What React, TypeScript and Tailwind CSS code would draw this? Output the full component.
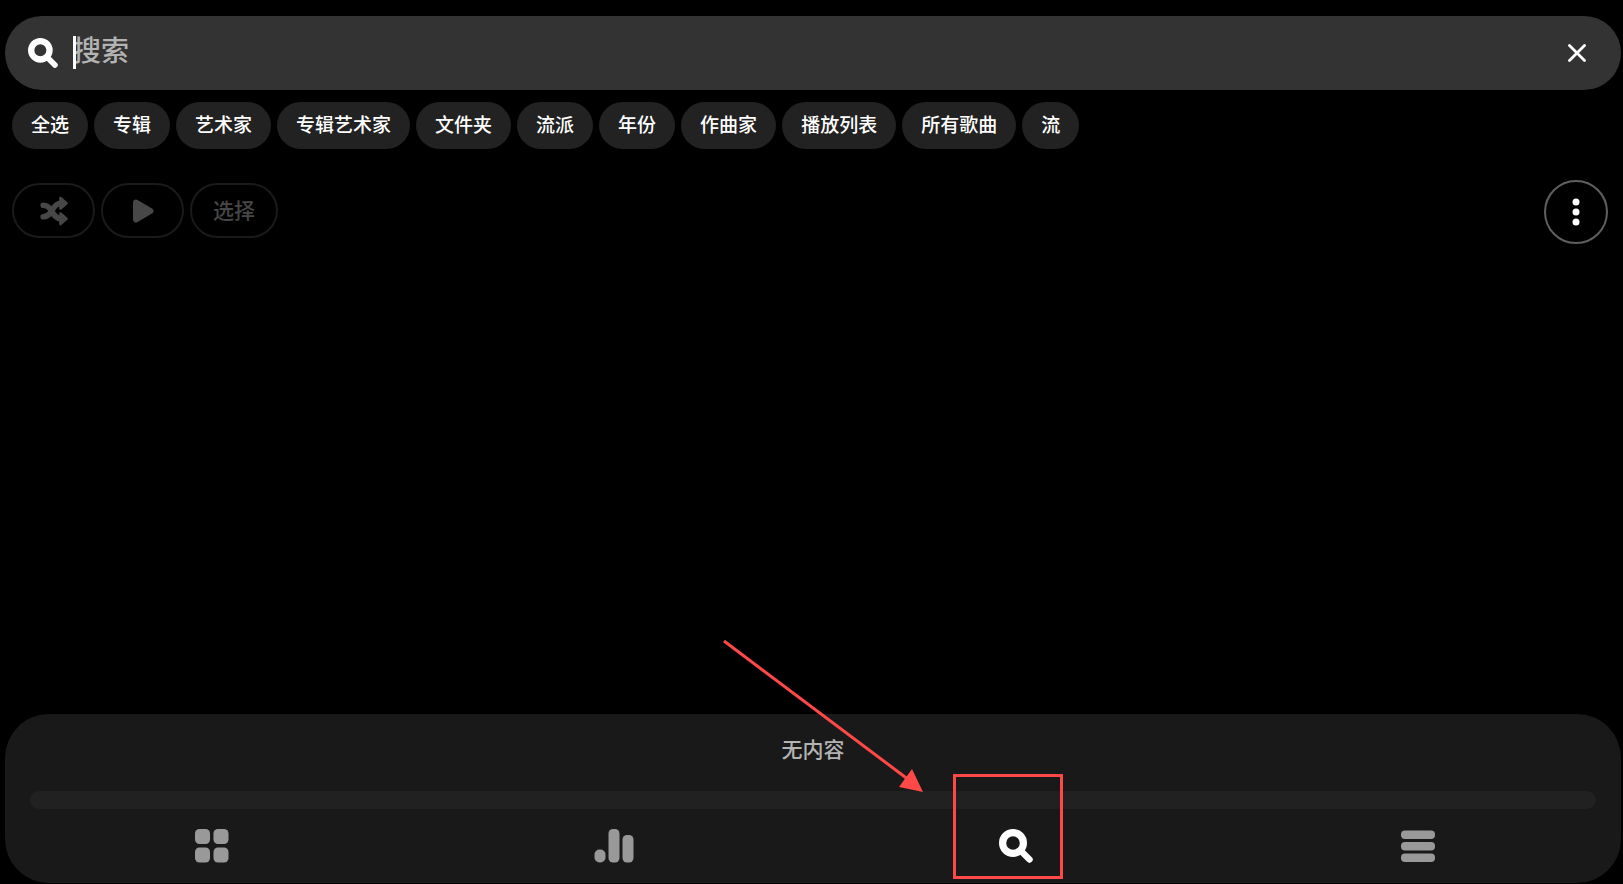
import { useState } from "react";

const filters = [
  "全选",
  "专辑",
  "艺术家",
  "专辑艺术家",
  "文件夹",
  "流派",
  "年份",
  "作曲家",
  "播放列表",
  "所有歌曲",
  "流",
];

const SearchIcon = ({ className }: { className?: string }) => (
  <svg viewBox="0 0 34 34" fill="none" stroke="currentColor" className={className} aria-hidden="true">
    <circle cx="14" cy="14" r="10.4" strokeWidth="7.2" />
    <path d="M22 22l8.5 8.5" strokeWidth="6.4" strokeLinecap="round" />
  </svg>
);

const ShuffleIcon = () => (
  <svg viewBox="0 0 28 30" fill="currentColor" className="h-[30px] w-7" aria-hidden="true">
    <path
      d="M3.2 9.2C7.5 9.2 9.5 11.5 11.5 15S16 22.8 21 22.8M3.2 20.8C7.5 20.8 9.5 18.5 11.5 15S16 7.2 21 7.2"
      fill="none"
      stroke="currentColor"
      strokeWidth="5.6"
      strokeLinecap="round"
    />
    <path
      d="M20.5 2L26.5 7.2L20.5 12.4ZM20.5 17.6L26.5 22.8L20.5 28Z"
      stroke="currentColor"
      strokeWidth="2.6"
      strokeLinejoin="round"
    />
  </svg>
);

const PlayIcon = () => (
  <svg viewBox="0 0 22 24" fill="currentColor" className="h-6 w-[22px]" aria-hidden="true">
    <path
      d="M4 3.5L18.5 12L4 20.5Z"
      stroke="currentColor"
      strokeWidth="6"
      strokeLinejoin="round"
    />
  </svg>
);

const LibraryIcon = () => (
  <svg viewBox="0 0 34 34" fill="currentColor" className="size-[34px]" aria-hidden="true">
    <rect width="15" height="15" rx="4.5" />
    <rect x="18.5" width="15" height="15" rx="4.5" />
    <rect y="18.5" width="15" height="15" rx="4.5" />
    <rect x="18.5" y="18.5" width="15" height="15" rx="4.5" />
  </svg>
);

const EqualizerIcon = () => (
  <svg viewBox="0 0 40 34" fill="currentColor" className="h-[34px] w-10" aria-hidden="true">
    <rect x="0.5" y="20.5" width="11" height="13" rx="5" />
    <rect x="14.5" y="0" width="11" height="33.5" rx="4.5" />
    <rect x="28.5" y="6" width="11" height="27.5" rx="4.5" />
  </svg>
);

const MenuIcon = () => (
  <svg viewBox="0 0 34 34" fill="currentColor" className="size-[34px]" aria-hidden="true">
    <rect y="1.5" width="34" height="8.5" rx="4" />
    <rect y="13" width="34" height="8.5" rx="4" />
    <rect y="24.5" width="34" height="8.5" rx="4" />
  </svg>
);

const App = () => {
  const [query, setQuery] = useState("");

  return (
    <div className="flex min-h-screen flex-col bg-black pt-4 font-['Noto_Sans_CJK_SC',sans-serif] font-medium text-white">
      {/* Search bar */}
      <div className="mr-[2px] ml-[5px] flex h-[74px] items-center rounded-full bg-[#333333] pr-[35px] pl-[23px]">
        <SearchIcon className="size-[30px] shrink-0" />
        <div className="relative ml-[15px] flex-1">
          <input
            type="text"
            aria-label="搜索"
            placeholder="搜索"
            value={query}
            onChange={(e) => setQuery(e.target.value)}
            className="block h-10 w-full bg-transparent pb-2 text-[28px] leading-8 outline-none placeholder:text-[#b3b3b3]"
          />
          {query === "" && <span className="absolute top-[3px] left-0 h-[33px] w-[3px] bg-white" />}
        </div>
        <button type="button" aria-label="清除" onClick={() => setQuery("")}>
          <svg
            viewBox="0 0 18 18"
            fill="none"
            stroke="currentColor"
            strokeWidth="2.8"
            strokeLinecap="round"
            className="size-[18px]"
            aria-hidden="true"
          >
            <path d="M1.5 1.5l15 15M16.5 1.5l-15 15" />
          </svg>
        </button>
      </div>

      {/* Category filters */}
      <div className="mt-3 flex flex-wrap gap-[6px] px-3">
        {filters.map((filter) => (
          <button
            key={filter}
            type="button"
            className="h-[47px] rounded-full bg-[#222222] px-[19px] pb-1 text-[19px] leading-7"
          >
            {filter}
          </button>
        ))}
      </div>

      {/* List actions */}
      <div className="mt-[31px] flex items-start justify-between pr-[15px] pl-3">
        <div className="flex gap-[6px] pt-[3px]">
          <button
            type="button"
            aria-label="随机播放"
            className="flex h-[55px] w-[83px] items-center justify-center rounded-full border-2 border-[#1a1a1a] text-[#474747]"
          >
            <ShuffleIcon />
          </button>
          <button
            type="button"
            aria-label="播放"
            className="flex h-[55px] w-[83px] items-center justify-center rounded-full border-2 border-[#1a1a1a] text-[#474747]"
          >
            <PlayIcon />
          </button>
          <button
            type="button"
            className="h-[55px] rounded-full border-2 border-[#1a1a1a] px-[21px] pb-1 text-[21px] leading-7 text-[#474747]"
          >
            选择
          </button>
        </div>
        <button
          type="button"
          aria-label="更多"
          className="flex size-16 items-center justify-center rounded-full border-2 border-[#606060]"
        >
          <svg viewBox="0 0 8 28" fill="currentColor" className="h-7 w-2" aria-hidden="true">
            <circle cx="4" cy="4" r="3.5" />
            <circle cx="4" cy="14" r="3.5" />
            <circle cx="4" cy="24" r="3.5" />
          </svg>
        </button>
      </div>

      {/* Player panel */}
      <div className="mt-auto mr-[2px] mb-px ml-[5px] rounded-[44px] bg-[#191919] pt-[18px] pb-5">
        <p className="text-center text-[21px] leading-8 text-[#b3b3b3]">无内容</p>
        <div className="mx-[25px] mt-[27px] h-[18px] rounded-full bg-[#212121]" />
        <nav className="mt-5 mr-[2px] ml-[6px] grid grid-cols-4 justify-items-center text-[#999999]">
          <button type="button" aria-label="音乐库">
            <LibraryIcon />
          </button>
          <button type="button" aria-label="均衡器">
            <EqualizerIcon />
          </button>
          <button type="button" aria-label="搜索" className="relative text-white">
            <SearchIcon className="size-[34px]" />
            {/* Callout around the search tab */}
            <span className="pointer-events-none absolute -top-[55px] -left-[46px] h-[105px] w-[110px] border-3 border-[#ff4848]" />
            <svg
              viewBox="0 0 202 154"
              className="pointer-events-none absolute -top-[190px] -left-[276px] h-[154px] w-[202px] max-w-none"
              aria-hidden="true"
            >
              <path d="M1 2L186 141" stroke="#ff4848" strokeWidth="3" />
              <path d="M200 153L189 130L176 148Z" fill="#ff4848" />
            </svg>
          </button>
          <button type="button" aria-label="菜单">
            <MenuIcon />
          </button>
        </nav>
      </div>
    </div>
  );
};

export default App;
